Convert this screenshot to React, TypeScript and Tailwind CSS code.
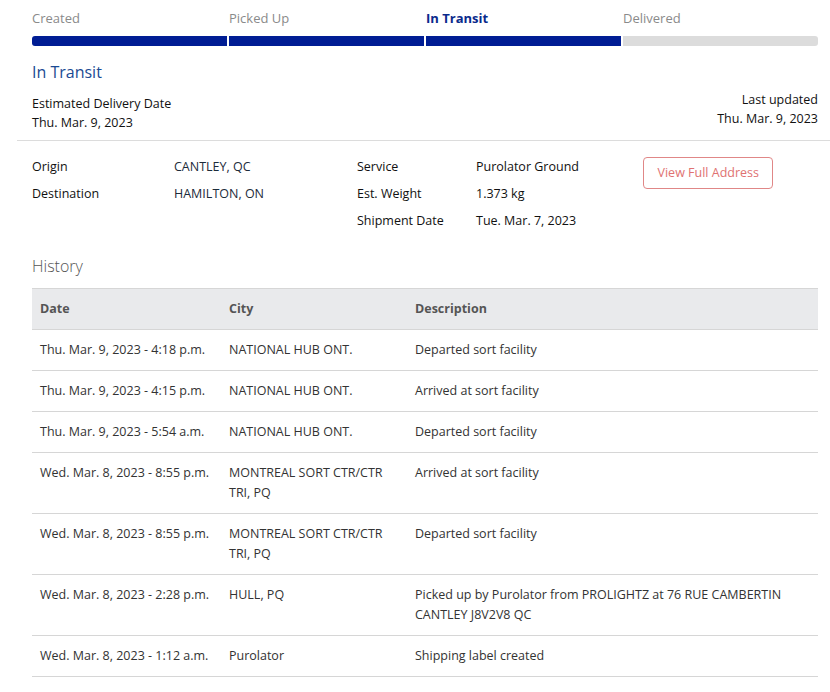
import React from 'react';

const steps = [
  { label: 'Created', done: true },
  { label: 'Picked Up', done: true },
  { label: 'In Transit', done: true, current: true },
  { label: 'Delivered', done: false },
];

const details = [
  ['Origin', 'CANTLEY, QC'],
  ['Destination', 'HAMILTON, ON'],
];

const service = [
  ['Service', 'Purolator Ground'],
  ['Est. Weight', '1.373 kg'],
  ['Shipment Date', 'Tue. Mar. 7, 2023'],
];

const history = [
  ['Thu. Mar. 9, 2023 - 4:18 p.m.', 'NATIONAL HUB ONT.', 'Departed sort facility'],
  ['Thu. Mar. 9, 2023 - 4:15 p.m.', 'NATIONAL HUB ONT.', 'Arrived at sort facility'],
  ['Thu. Mar. 9, 2023 - 5:54 a.m.', 'NATIONAL HUB ONT.', 'Departed sort facility'],
  ['Wed. Mar. 8, 2023 - 8:55 p.m.', 'MONTREAL SORT CTR/CTR TRI, PQ', 'Arrived at sort facility'],
  ['Wed. Mar. 8, 2023 - 8:55 p.m.', 'MONTREAL SORT CTR/CTR TRI, PQ', 'Departed sort facility'],
  ['Wed. Mar. 8, 2023 - 2:28 p.m.', 'HULL, PQ', 'Picked up by Purolator from PROLIGHTZ at 76 RUE CAMBERTIN CANTLEY J8V2V8 QC'],
  ['Wed. Mar. 8, 2023 - 1:12 a.m.', 'Purolator', 'Shipping label created'],
];

export default function App() {
  return (
    <div className="bg-white w-[830px] h-[692px] overflow-hidden font-['Open_Sans',sans-serif] text-[13px] text-[#111]">
      {/* progress */}
      <div className="px-[32px] pr-[12px] pt-[9px]">
        <div className="grid grid-cols-4 gap-[2px]">
          {steps.map((s) => (
            <span
              key={s.label}
              className={`leading-[18px] ${s.current ? 'font-bold text-[#0a2a8c]' : 'text-[#8a8a8a]'}`}
            >
              {s.label}
            </span>
          ))}
        </div>
        <div className="grid grid-cols-4 gap-[2px] mt-[9px]">
          {steps.map((s, i) => (
            <div
              key={s.label}
              className={`h-[10px] ${s.done ? 'bg-[#001d94]' : 'bg-[#dcdcdc]'} ${i === 0 ? 'rounded-l-[3px]' : ''} ${i === 3 ? 'rounded-r-[3px]' : ''}`}
            />
          ))}
        </div>
        <h2 className="mt-[15px] text-[16px] leading-[22px] text-[#1a4a93]">In Transit</h2>
        <div className="flex justify-between items-start mt-[9px] pb-[8px] leading-[19px]">
          <div className="pt-[2px]">
            <div className="text-[12.5px]">Estimated Delivery Date</div>
            <div className="text-[12.5px]">Thu. Mar. 9, 2023</div>
          </div>
          <div className="text-right -mt-[2px]">
            <div className="text-[12.5px]">Last updated</div>
            <div className="text-[12.5px]">Thu. Mar. 9, 2023</div>
          </div>
        </div>
      </div>
      <div className="ml-[17px] border-t border-[#dcdcdc]" />

      {/* details */}
      <div className="flex px-[32px] pt-[12px] leading-[27px] text-[12.5px]">
        <div className="w-[325px] flex flex-col">
          {details.map(([k, v]) => (
            <div key={k} className="flex">
              <span className="w-[142px]">{k}</span>
              <span className="text-[#1c2b3a]">{v}</span>
            </div>
          ))}
        </div>
        <div className="w-[286px] flex flex-col">
          {service.map(([k, v]) => (
            <div key={k} className="flex">
              <span className="w-[119px]">{k}</span>
              <span>{v}</span>
            </div>
          ))}
        </div>
        <div className="pt-[4px]">
          <button className="h-[32px] px-[13.5px] border border-[#e08787] rounded-[4px] text-[#e07272] leading-[30px] text-[12.5px]">
            View Full Address
          </button>
        </div>
      </div>

      <h3 className="px-[32px] mt-[21px] text-[16px] leading-[22px] text-[#555] font-light">History</h3>

      {/* table */}
      <div className="ml-[32px] mr-[12px] mt-[11px]">
        <table className="w-full border-collapse text-[12.5px]">
          <thead>
            <tr className="bg-[#e9eaec] border-t border-b border-[#d6d6d6]">
              <th className="w-[189px] text-left font-bold text-[#555] px-[8px] h-[41px]">Date</th>
              <th className="w-[186px] text-left font-bold text-[#555] px-[8px]">City</th>
              <th className="text-left font-bold text-[#555] px-[8px]">Description</th>
            </tr>
          </thead>
          <tbody>
            {history.map((r, i) => (
              <tr key={i} className="border-b border-[#d6d6d6] align-top text-[#333] leading-[20px]">
                <td className="px-[8px] py-[10px]">{r[0]}</td>
                <td className="px-[8px] py-[10px] pr-[14px]">{r[1]}</td>
                <td className="px-[8px] py-[10px] pr-[20px]">{r[2]}</td>
              </tr>
            ))}
          </tbody>
        </table>
      </div>
    </div>
  );
}
